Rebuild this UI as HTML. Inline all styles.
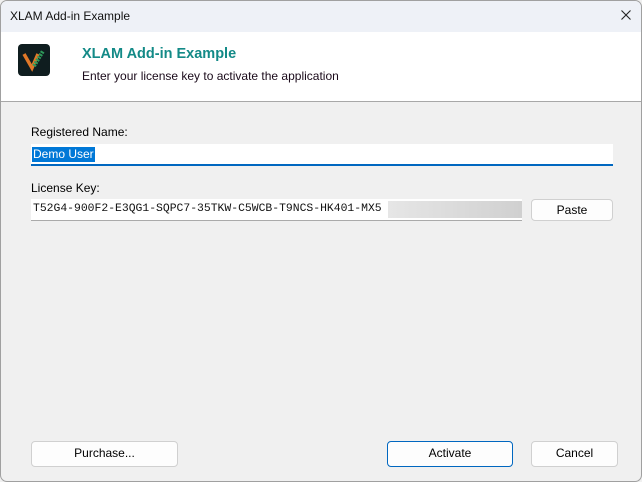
<!DOCTYPE html>
<html><head><style>
*{margin:0;padding:0;box-sizing:border-box}
body{width:642px;height:482px;background:#f0f0f0;font-family:"Liberation Sans",sans-serif;position:relative;overflow:hidden;font-size:12px;color:#000}
.win{position:absolute;left:0;top:0;width:642px;height:482px;border:1px solid #a0a0a0;border-radius:7px;overflow:hidden;background:#f0f0f0}
.title{position:absolute;left:0;top:0;width:100%;height:31px;background:#eef1f7}
.title span{position:absolute;left:9px;top:8px;font-size:12px;color:#111}
.x{position:absolute;right:9px;top:8px}
.head{position:absolute;left:0;top:31px;width:100%;height:70px;background:#fff;border-bottom:1px solid #a8a8a8}
.logo{position:absolute;left:17px;top:43px;width:32px;height:32px;background:#0f1d1f;border-radius:4px}
.h1{position:absolute;left:81px;top:45px;font-size:14.5px;font-weight:bold;color:#138a87}
.h2{position:absolute;left:81px;top:68px;font-size:12px;color:#1a0a1a}
.lbl{position:absolute;left:30px;font-size:12px}
.in{position:absolute;background:#fff}
.btn{position:absolute;background:#fdfdfd;border:1px solid #d0d0d0;border-radius:4px;text-align:center;font-size:12px;line-height:23px}
</style></head><body><div class="win">
<div class="title"><span>XLAM Add-in Example</span>
<svg class="x" width="12" height="12" viewBox="0 0 12 12"><path d="M1.5 1.5L10.5 10.5M10.5 1.5L1.5 10.5" stroke="#222" stroke-width="1.1"/></svg></div>
<div class="head"></div>
<div class="logo"><svg width="32" height="32" viewBox="0 0 32 32"><path d="M6 10 L14 24 L20 10" stroke="#e07828" stroke-width="3.5" fill="none"/><path d="M16 22 L25 7" stroke="#2e9a5a" stroke-width="4" stroke-dasharray="2 1" fill="none"/></svg></div>
<div class="h1">XLAM Add-in Example</div>
<div class="h2">Enter your license key to activate the application</div>
<div class="lbl" style="top:124px">Registered Name:</div>
<div class="in" style="left:30px;top:143px;width:582px;height:22px;border-bottom:2px solid #0067c0"><span style="position:absolute;left:1px;top:3px;background:#0078d7;color:#fff;padding:0 1px;line-height:15px">Demo User</span></div>
<div class="lbl" style="top:180px">License Key:</div>
<div class="in" style="left:30px;top:198px;width:491px;height:22px;border-bottom:1px solid #aaa"><span style="position:absolute;left:2px;top:4px;font-family:'Liberation Mono',monospace;font-size:11.4px;color:#111">T52G4-900F2-E3QG1-SQPC7-35TKW-C5WCB-T9NCS-HK401-MX5</span><div style="position:absolute;left:357px;top:2px;width:134px;height:17px;background:linear-gradient(90deg,#e6e6e6,#d0d0d0)"></div></div>
<div class="btn" style="left:530px;top:198px;width:82px;height:22px;line-height:20px">Paste</div>
<div class="btn" style="left:30px;top:440px;width:147px;height:26px">Purchase...</div>
<div class="btn" style="left:386px;top:440px;width:126px;height:26px;border-color:#0067c0">Activate</div>
<div class="btn" style="left:530px;top:440px;width:87px;height:26px">Cancel</div>
</div></body></html>
